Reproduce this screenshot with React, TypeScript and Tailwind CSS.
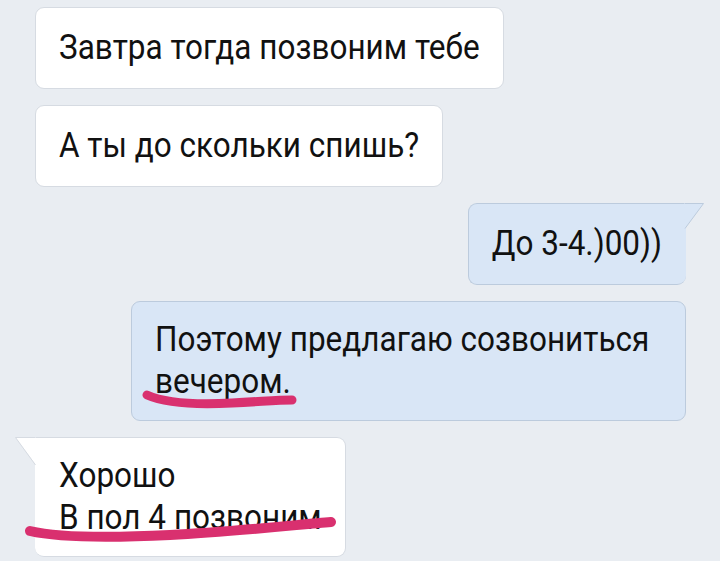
const FONT = { fontFamily: 'Roboto, "Noto Sans", sans-serif' }

function Incoming({ children, tail }: { children: React.ReactNode; tail?: boolean }) {
  return (
    <div className="relative self-start ml-[35px]">
      {tail && (
        <svg className="absolute left-[-21px] top-0" width="23" height="30" viewBox="0 0 23 30" fill="none">
          <path d="M22 0.5H1.5L22 28" fill="#ffffff" />
          <path d="M21.5 0.5H1.5L21.5 28" stroke="#d6dbe2" strokeWidth="1" fill="none" />
        </svg>
      )}
      <div
        className={
          'bg-white border border-[#d6dbe2] rounded-[9px] px-[23px] py-[21px] text-[31.5px] leading-[38px] text-[#111]' +
          (tail ? ' rounded-tl-none border-l-0 pl-[24px]' : '')
        }
      >
        <div className="scale-y-110">{children}</div>
      </div>
    </div>
  )
}

function Outgoing({ children, tail, className }: { children: React.ReactNode; tail?: boolean; className?: string }) {
  return (
    <div className={'relative self-end mr-[34px] ' + (className ?? '')}>
      {tail && (
        <svg className="absolute right-[-19px] top-0" width="21" height="27" viewBox="0 0 21 27" fill="none">
          <path d="M0 0.5H19.5L1 25.5" fill="#d9e6f6" />
          <path d="M1 0.5H19.5L1 25.5" stroke="#bccbdd" strokeWidth="1" fill="none" />
        </svg>
      )}
      <div
        className={
          'bg-[#d9e6f6] border border-[#bccbdd] rounded-[9px] px-[23px] py-[21px] text-[31.5px] leading-[38px] text-[#111]' +
          (tail ? ' rounded-tr-none border-r-0 pr-[24px]' : '')
        }
      >
        <div className="scale-y-110">{children}</div>
      </div>
    </div>
  )
}

export default function App() {
  return (
    <div className="relative w-[720px] h-[561px] bg-[#e9edf2] overflow-hidden flex flex-col gap-[16px] pt-[7px]" style={FONT}>
      <Incoming>Завтра тогда позвоним тебе</Incoming>
      <Incoming>А ты до скольки спишь?</Incoming>
      <Outgoing tail>До 3-4.)00))</Outgoing>
      <Outgoing className="w-[555px]">
        Поэтому предлагаю созвониться
        <br />
        вечером.
      </Outgoing>
      <Incoming tail>
        Хорошо
        <br />
        В пол 4 позвоним
      </Incoming>

      {/* подчёркивания от руки */}
      <svg className="absolute left-0 top-0 pointer-events-none" width="720" height="561" viewBox="0 0 720 561" fill="none">
        <path
          d="M147 395 C 165 403, 195 405, 232 403 S 278 400, 292 400"
          stroke="#d9306f"
          strokeWidth="9"
          strokeLinecap="round"
          fill="none"
        />
        <path
          d="M30 531 C 60 538, 110 538, 170 535 S 295 525, 331 522"
          stroke="#d9306f"
          strokeWidth="10"
          strokeLinecap="round"
          fill="none"
        />
      </svg>
    </div>
  )
}
